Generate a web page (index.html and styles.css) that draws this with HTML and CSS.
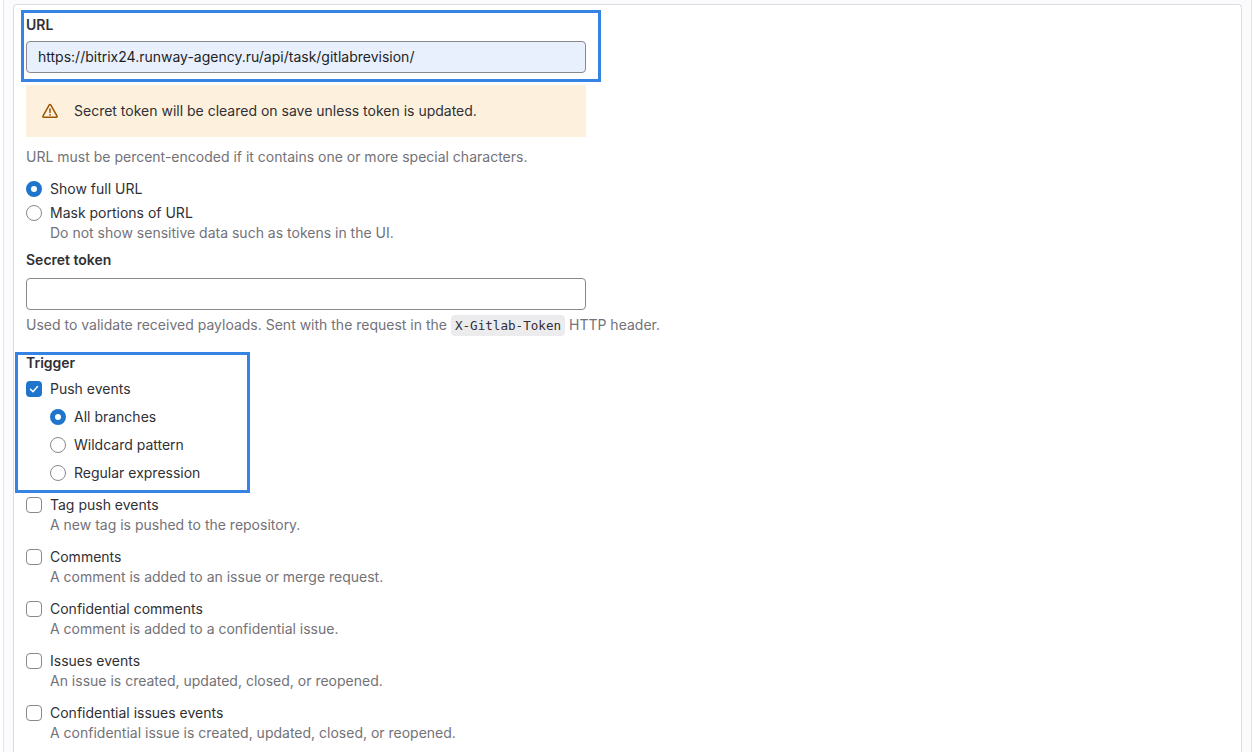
FILE: index.html
```html
<!DOCTYPE html>
<html lang="en">
<head>
    <meta charset="UTF-8">
    <meta name="viewport" content="width=device-width, initial-scale=1.0">
    <title>Webhook settings</title>
    <link rel="stylesheet" href="styles.css">
</head>
<body>
    <div class="shell">
        <form class="panel">
            <div class="field url-field">
                <label class="label">URL</label>
                <input class="input input-filled" type="text" value="https://bitrix24.runway-agency.ru/api/task/gitlabrevision/">
            </div>
            <div class="alert">
                <svg class="alert-icon" width="16" height="16" viewBox="0 0 16 16" fill="none">
                    <path d="M8 1.5c.3 0 .6.2.75.4l6.3 11.3c.3.5-.1 1.05-.65 1.05H1.6c-.55 0-.95-.55-.65-1.05l6.3-11.3c.15-.2.45-.4.75-.4Z" stroke="#9e5400" stroke-width="1.5" stroke-linejoin="round"/>
                    <path d="M8 6V9.5" stroke="#9e5400" stroke-width="1.5" stroke-linecap="round"/>
                    <circle cx="8" cy="11.8" r="0.9" fill="#9e5400"/>
                </svg>
                <span>Secret token will be cleared on save unless token is updated.</span>
            </div>
            <p class="help url-help">URL must be percent-encoded if it contains one or more special characters.</p>

            <div class="choice mask-first">
                <span class="radio checked"></span>
                <span>Show full URL</span>
            </div>
            <div class="choice mask-second">
                <span class="radio"></span>
                <div>
                    <div>Mask portions of URL</div>
                    <div class="help">Do not show sensitive data such as tokens in the UI.</div>
                </div>
            </div>

            <div class="field token-field">
                <label class="label">Secret token</label>
                <input class="input" type="text">
            </div>
            <p class="help token-help">Used to validate received payloads. Sent with the request in the <code>X-Gitlab-Token</code> HTTP header.</p>

            <div class="trigger-box">
                <div class="label trigger-label">Trigger</div>
                <div class="choice">
                    <span class="checkbox checked">
                        <svg width="16" height="16" viewBox="0 0 16 16" fill="none"><path d="M4.5 8.2 L7 10.7 L11.5 5.6" stroke="#fff" stroke-width="1.5" stroke-linecap="round" stroke-linejoin="round"/></svg>
                    </span>
                    <span>Push events</span>
                </div>
                <div class="sub-choices">
                    <div class="choice"><span class="radio checked"></span><span>All branches</span></div>
                    <div class="choice"><span class="radio"></span><span>Wildcard pattern</span></div>
                    <div class="choice"><span class="radio"></span><span>Regular expression</span></div>
                </div>
            </div>

            <div class="events">
                <div class="choice">
                    <span class="checkbox"></span>
                    <div><div>Tag push events</div><div class="help">A new tag is pushed to the repository.</div></div>
                </div>
                <div class="choice">
                    <span class="checkbox"></span>
                    <div><div>Comments</div><div class="help">A comment is added to an issue or merge request.</div></div>
                </div>
                <div class="choice">
                    <span class="checkbox"></span>
                    <div><div>Confidential comments</div><div class="help">A comment is added to a confidential issue.</div></div>
                </div>
                <div class="choice">
                    <span class="checkbox"></span>
                    <div><div>Issues events</div><div class="help">An issue is created, updated, closed, or reopened.</div></div>
                </div>
                <div class="choice">
                    <span class="checkbox"></span>
                    <div><div>Confidential issues events</div><div class="help">A confidential issue is created, updated, closed, or reopened.</div></div>
                </div>
            </div>
        </form>
    </div>
</body>
</html>
```

FILE: styles.css
```css
html, body {
    margin: 0;
    padding: 0;
    height: 752px;
    overflow: hidden;
    background: #fff;
}
body {
    font-family: Inter, "Liberation Sans", sans-serif;
    font-size: 14px;
    line-height: 20px;
    color: #303035;
}
.shell {
    box-sizing: border-box;
    width: 1249px;
    height: 752px;
    margin-left: 3px;
    padding: 4px 9px 0 9px;
    background: #fbfafd;
    border-left: 1px solid #e5e5e8;
    border-right: 1px solid #e5e5e8;
}
.panel {
    box-sizing: border-box;
    height: 748px;
    padding: 10px 12px 0 12px;
    background: #fff;
    border: 1px solid #dcdcde;
    border-bottom: none;
    border-radius: 4px 4px 0 0;
}
.field {
    width: 560px;
}
.url-field {
    position: relative;
}
.url-field::after {
    content: "";
    position: absolute;
    left: -5px;
    top: -5px;
    width: 574px;
    height: 66px;
    border: 3px solid #3584e4;
    pointer-events: none;
}
.label {
    display: block;
    font-weight: 600;
    margin-bottom: 6px;
}
.input {
    display: block;
    box-sizing: border-box;
    width: 560px;
    height: 32px;
    padding: 0 11px 2px;
    border: 1px solid #89888d;
    border-radius: 4px;
    font: inherit;
    color: #1f1e24;
    background: #fff;
    outline: none;
}
.input-filled {
    background: #e8f0fe;
}
.alert {
    box-sizing: border-box;
    display: flex;
    align-items: center;
    gap: 16px;
    width: 560px;
    height: 52px;
    margin-top: 12px;
    padding: 0 16px;
    background: #fdf1dd;
}
.alert-icon {
    flex-shrink: 0;
}
.help {
    color: #737278;
}
p.help {
    margin: 0;
}
p.url-help {
    margin-top: 10px;
}
.choice {
    display: flex;
    gap: 8px;
}
.radio, .checkbox {
    box-sizing: border-box;
    flex-shrink: 0;
    width: 16px;
    height: 16px;
    margin-top: 2px;
    background: #fff;
    border: 1px solid #89888d;
}
.radio {
    border-radius: 50%;
}
.radio.checked {
    border: 5px solid #1f75cb;
}
.checkbox {
    border-radius: 4px;
}
.checkbox.checked {
    background: #1f75cb;
    border: none;
}
.checkbox svg {
    display: block;
}
.mask-first {
    margin-top: 12px;
}
.mask-second {
    margin-top: 4px;
}
.token-field {
    margin-top: 7px;
}
.token-field .label {
    margin-bottom: 8px;
}
p.token-help {
    margin-top: 5px;
}
code {
    font-family: "DejaVu Sans Mono", monospace;
    font-size: 12.6px;
    padding: 3px 4px;
    background: #ececef;
    border-radius: 4px;
    color: #303035;
}
.trigger-box {
    position: relative;
    margin-top: 17px;
}
.trigger-box::after {
    content: "";
    position: absolute;
    left: -11px;
    top: -1px;
    width: 229px;
    height: 135px;
    border: 3px solid #3584e4;
    pointer-events: none;
}
.trigger-label {
    margin-bottom: 6px;
}
.sub-choices {
    margin-top: 8px;
    padding-left: 24px;
    display: flex;
    flex-direction: column;
    gap: 8px;
}
.events {
    margin-top: 12px;
    display: flex;
    flex-direction: column;
    gap: 12px;
}
```
